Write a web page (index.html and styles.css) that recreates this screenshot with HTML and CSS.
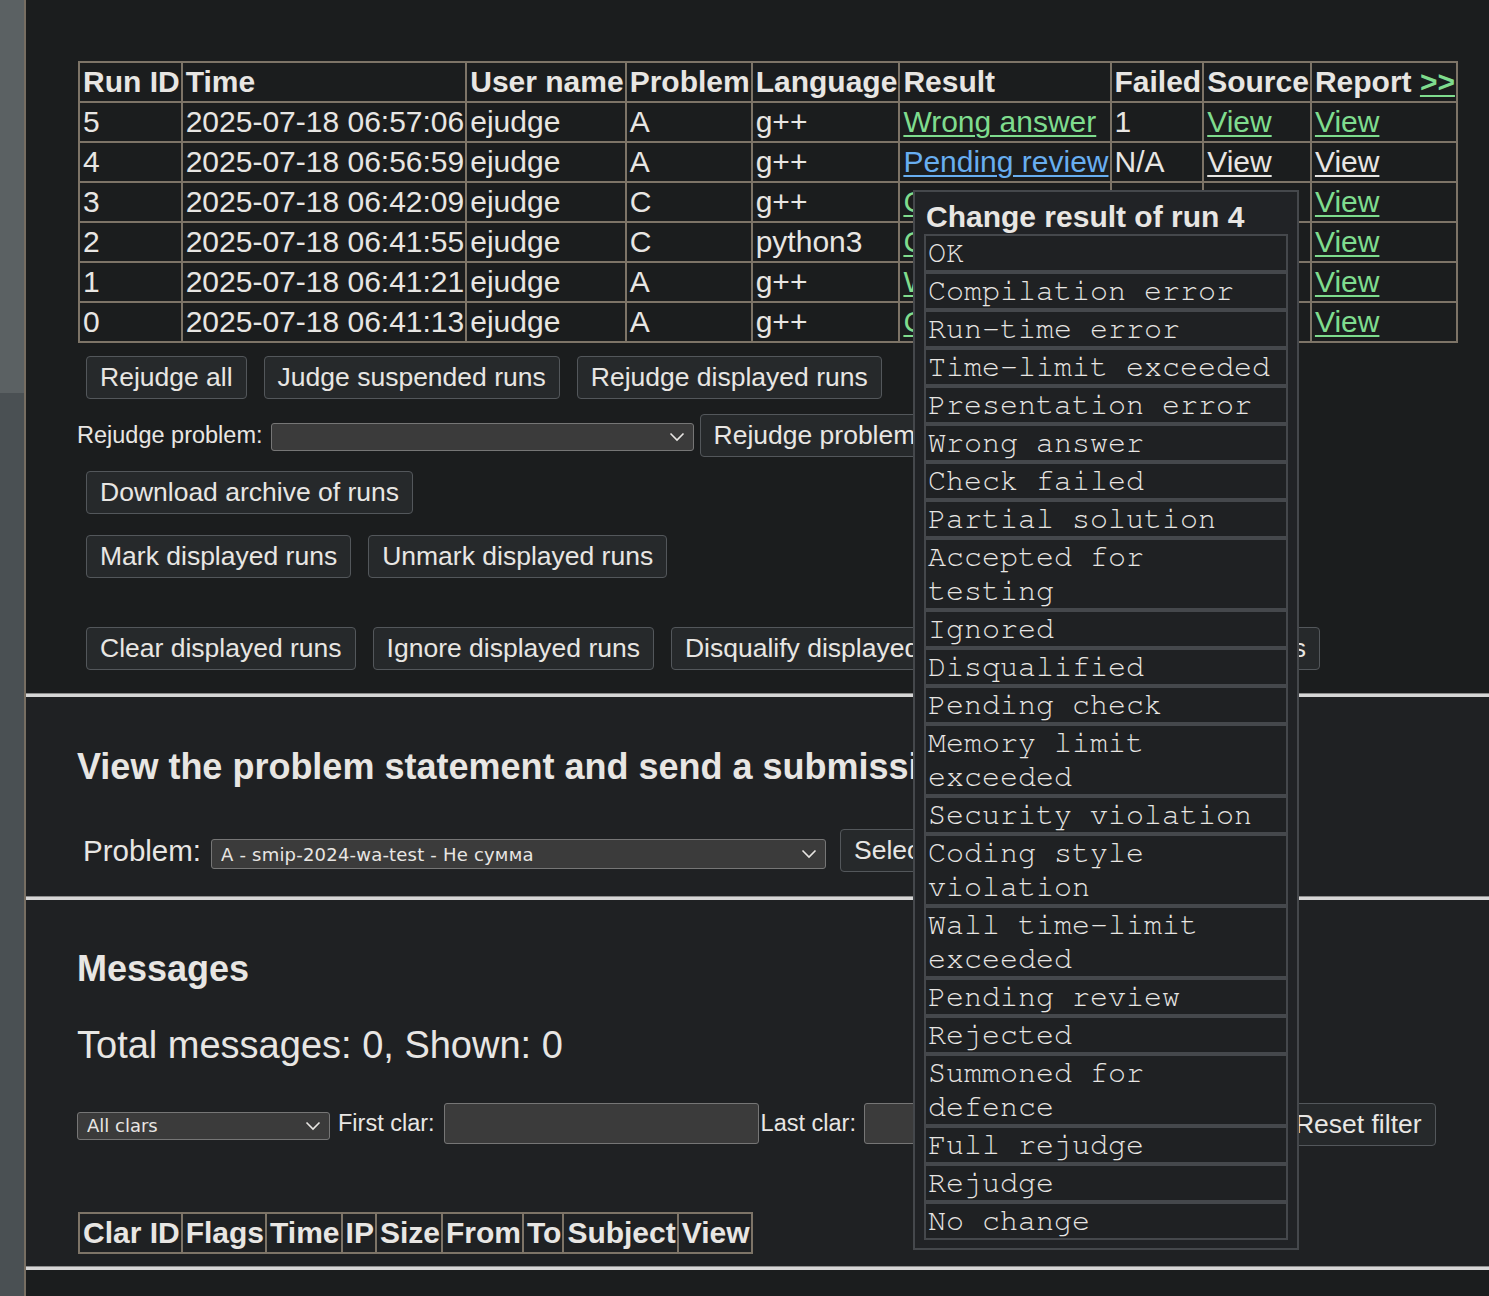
FILE: index.html
```html
<!DOCTYPE html>
<html lang="en">
<head>
<meta charset="utf-8">
<title>Runs</title>
<link rel="stylesheet" href="styles.css">
</head>
<body>
<div class="page">
  <aside class="sidebar">
    <div class="side-top"></div>
    <div class="side-rest"></div>
  </aside>
  <main class="main">
    <section class="sec sec-runs">
      <table class="grid runs-table">
        <tr><th>Run ID</th><th>Time</th><th>User name</th><th>Problem</th><th>Language</th><th>Result</th><th>Failed</th><th>Source</th><th>Report <a class="lnk green" href="#">&gt;&gt;</a></th></tr>
        <tr><td>5</td><td>2025-07-18 06:57:06</td><td>ejudge</td><td>A</td><td>g++</td><td><a class="lnk green" href="#">Wrong answer</a></td><td>1</td><td><a class="lnk green" href="#">View</a></td><td><a class="lnk green" href="#">View</a></td></tr>
        <tr><td>4</td><td>2025-07-18 06:56:59</td><td>ejudge</td><td>A</td><td>g++</td><td><a class="lnk blue" href="#">Pending review</a></td><td>N/A</td><td><a class="lnk white" href="#">View</a></td><td><a class="lnk white" href="#">View</a></td></tr>
        <tr><td>3</td><td>2025-07-18 06:42:09</td><td>ejudge</td><td>C</td><td>g++</td><td><a class="lnk green" href="#">Check failed</a></td><td>N/A</td><td><a class="lnk green" href="#">View</a></td><td><a class="lnk green" href="#">View</a></td></tr>
        <tr><td>2</td><td>2025-07-18 06:41:55</td><td>ejudge</td><td>C</td><td>python3</td><td><a class="lnk green" href="#">Check failed</a></td><td>N/A</td><td><a class="lnk green" href="#">View</a></td><td><a class="lnk green" href="#">View</a></td></tr>
        <tr><td>1</td><td>2025-07-18 06:41:21</td><td>ejudge</td><td>A</td><td>g++</td><td><a class="lnk green" href="#">Wrong answer</a></td><td>1</td><td><a class="lnk green" href="#">View</a></td><td><a class="lnk green" href="#">View</a></td></tr>
        <tr><td>0</td><td>2025-07-18 06:41:13</td><td>ejudge</td><td>A</td><td>g++</td><td><a class="lnk green" href="#">Check failed</a></td><td>N/A</td><td><a class="lnk green" href="#">View</a></td><td><a class="lnk green" href="#">View</a></td></tr>
      </table>

      <div class="btn-row row-1">
        <button class="btn">Rejudge all</button>
        <button class="btn">Judge suspended runs</button>
        <button class="btn">Rejudge displayed runs</button>
      </div>

      <div class="form-row row-2">
        <span class="lbl">Rejudge problem:</span>
        <span class="selwrap sel-rejudge">
          <select class="sel"><option></option></select>
          <svg class="chev" width="16" height="10" viewBox="0 0 16 10"><path d="M1.5 1.5 L8 8 L14.5 1.5" fill="none" stroke="#e8e6e3" stroke-width="1.6"/></svg>
        </span>
        <button class="btn">Rejudge problem</button>
      </div>

      <div class="btn-row row-3">
        <button class="btn">Download archive of runs</button>
      </div>

      <div class="btn-row row-4">
        <button class="btn">Mark displayed runs</button>
        <button class="btn">Unmark displayed runs</button>
      </div>

      <div class="btn-row row-5">
        <button class="btn">Clear displayed runs</button>
        <button class="btn">Ignore displayed runs</button>
        <button class="btn">Disqualify displayed runs</button>
        <button class="btn">Tokenize displayed runs</button>
      </div>
    </section>

    <div class="sep"></div>

    <section class="sec sec-submit">
      <h2 class="heading">View the problem statement and send a submission</h2>
      <div class="form-row prob-row">
        <span class="lbl-big">Problem:</span>
        <span class="selwrap sel-problem">
          <select class="sel sel-text"><option>A - smip-2024-wa-test - Не сумма</option></select>
          <svg class="chev" width="16" height="10" viewBox="0 0 16 10"><path d="M1.5 1.5 L8 8 L14.5 1.5" fill="none" stroke="#e8e6e3" stroke-width="1.6"/></svg>
        </span>
        <button class="btn">Select problem</button>
      </div>
    </section>

    <div class="sep"></div>

    <section class="sec sec-msgs">
      <h2 class="heading">Messages</h2>
      <p class="total">Total messages: 0, Shown: 0</p>
      <div class="form-row filter-row">
        <span class="selwrap sel-clars">
          <select class="sel sel-text"><option>All clars</option></select>
          <svg class="chev" width="16" height="10" viewBox="0 0 16 10"><path d="M1.5 1.5 L8 8 L14.5 1.5" fill="none" stroke="#e8e6e3" stroke-width="1.6"/></svg>
        </span>
        <span class="lbl lbl-first">First clar:</span>
        <input class="inp" type="text">
        <span class="lbl lbl-last">Last clar:</span>
        <input class="inp inp-last" type="text">
        <button class="btn btn-view">View</button>
        <button class="btn btn-reset">Reset filter</button>
      </div>
      <table class="grid clar-table">
        <tr><th>Clar ID</th><th>Flags</th><th>Time</th><th>IP</th><th>Size</th><th>From</th><th>To</th><th>Subject</th><th>View</th></tr>
      </table>
    </section>

    <div class="sep"></div>
  </main>

  <div class="popup">
    <div class="popup-title">Change result of run 4</div>
    <ul class="status-list">
      <li>OK</li>
      <li>Compilation error</li>
      <li>Run-time error</li>
      <li>Time-limit exceeded</li>
      <li>Presentation error</li>
      <li>Wrong answer</li>
      <li>Check failed</li>
      <li>Partial solution</li>
      <li>Accepted for testing</li>
      <li>Ignored</li>
      <li>Disqualified</li>
      <li>Pending check</li>
      <li>Memory limit exceeded</li>
      <li>Security violation</li>
      <li>Coding style violation</li>
      <li>Wall time-limit exceeded</li>
      <li>Pending review</li>
      <li>Rejected</li>
      <li>Summoned for defence</li>
      <li>Full rejudge</li>
      <li>Rejudge</li>
      <li>No change</li>
    </ul>
  </div>
</div>
</body>
</html>
```

FILE: styles.css
```css
* { box-sizing: border-box; }

html, body {
  margin: 0;
  padding: 0;
  background: #1b1d1e;
}

body {
  font-family: "Liberation Sans", Arial, sans-serif;
  color: #e8e6e3;
  overflow: hidden;
}

.page {
  position: relative;
  display: flex;
  min-height: 1296px;
}

/* sidebar */
.sidebar {
  width: 26px;
  flex: 0 0 26px;
  display: flex;
  flex-direction: column;
  border-right: 2px solid #776e62;
}
.side-top { height: 393px; background: #5b6163; }
.side-rest { flex: 1; background: #4a5053; }

.main {
  flex: 1;
  min-width: 0;
}

.sec {
  padding-left: 51px;
}

.sec-runs {
  background: #1b1d1e;
  padding-top: 61px;
  padding-bottom: 23px;
}

.sec-submit {
  background: #1f2123;
  padding-top: 49px;
  padding-bottom: 24px;
}

.sec-msgs {
  background: #1f2123;
  padding-top: 48px;
  padding-bottom: 12px;
}

.sep {
  height: 4px;
  border-top: 1px solid #8d8d8d;
  background: #d6d6d6;
}

/* tables */
.grid {
  border-collapse: collapse;
  border: 2px solid #7d7467;
  margin-left: 1px;
  font-size: 30px;
  line-height: 34px;
}
.grid th,
.grid td {
  border: 2px solid #7d7467;
  padding: 2px 1px 2px 3px;
  text-align: left;
  white-space: nowrap;
  vertical-align: middle;
}
.grid th { font-weight: bold; }

.lnk { text-decoration: underline; text-underline-offset: 3px; text-decoration-thickness: 2px; }
.green { color: #7fdc8e; }
.blue { color: #68aef0; }
.white { color: #e8e6e3; }

/* buttons */
.btn {
  height: 43px;
  padding: 0 13px;
  font-family: "Liberation Sans", Arial, sans-serif;
  font-size: 26.5px;
  color: #e8e6e3;
  background: #26292b;
  border: 1px solid #53575b;
  border-radius: 4px;
  white-space: nowrap;
  flex: 0 0 auto;
}

.btn-row {
  display: flex;
  gap: 17px;
  margin-left: 9px;
}
.row-1 { margin-top: 13px; }
.row-3 { margin-top: 14px; }
.row-4 { margin-top: 21px; }
.row-5 { margin-top: 49px; }

.form-row {
  display: flex;
  align-items: center;
}
.row-2 { margin-top: 15px; }

.lbl {
  font-size: 23.5px;
  white-space: nowrap;
}

.selwrap {
  position: relative;
  display: inline-block;
  flex: 0 0 auto;
}
.sel {
  appearance: none;
  -webkit-appearance: none;
  display: block;
  width: 100%;
  height: 100%;
  background: #3b3b3b;
  border: 1px solid #767676;
  border-radius: 3px;
  color: #e8e6e3;
  padding: 0 0 0 9px;
  font-family: "DejaVu Sans", Verdana, sans-serif;
  font-size: 18px;
}
.chev {
  position: absolute;
  right: 9px;
  top: 50%;
  margin-top: -5px;
}

.sel-rejudge {
  width: 423px;
  height: 28px;
  margin-left: 8px;
  margin-right: 6px;
  margin-top: 3px;
}

.prob-row { margin-top: 41px; padding-left: 6px; }
.lbl-big { font-size: 29.5px; white-space: nowrap; }
.sel-problem {
  width: 615px;
  height: 30px;
  margin-left: 10px;
  margin-right: 14px;
  margin-top: 7px;
}
.sel-problem .sel { letter-spacing: 0.2px; }

.heading {
  margin: 0;
  font-size: 36px;
  line-height: 42px;
  font-weight: bold;
  white-space: nowrap;
}

.total {
  margin: 33px 0 0 0;
  font-size: 38px;
  line-height: 44px;
}

.filter-row { margin-top: 34px; }
.sel-clars {
  width: 253px;
  height: 28px;
  margin-top: 4px;
}
.lbl-first { margin-left: 8px; margin-right: 9px; }
.lbl-last { margin-left: 2px; margin-right: 8px; }
.inp {
  width: 315px;
  height: 41px;
  background: #3b3b3b;
  border: 1px solid #767676;
  border-radius: 3px;
  flex: 0 0 auto;
}
.btn-view { margin-left: 6px; }
.btn-reset { margin-left: 11px; margin-top: 2px; }

.clar-table { margin-top: 66px; }

/* popup overlay */
.popup {
  position: absolute;
  left: 913px;
  top: 190px;
  width: 386px;
  background: #212326;
  border: 2px solid #45484c;
  padding: 8px 9px 8px 9px;
  z-index: 10;
}
.popup-title {
  font-size: 30px;
  line-height: 34px;
  font-weight: bold;
  padding-left: 2px;
}
.status-list {
  list-style: none;
  margin: 0;
  padding: 2px;
  background: #45484c;
  display: flex;
  flex-direction: column;
  gap: 4px;
}
.status-list li {
  background: #1f2123;
  font-family: "Nimbus Mono PS", "Nimbus Mono L", "FreeMono", "Liberation Mono", "Courier New", monospace;
  font-size: 30px;
  line-height: 34px;
  padding: 0 2px;
}
```
